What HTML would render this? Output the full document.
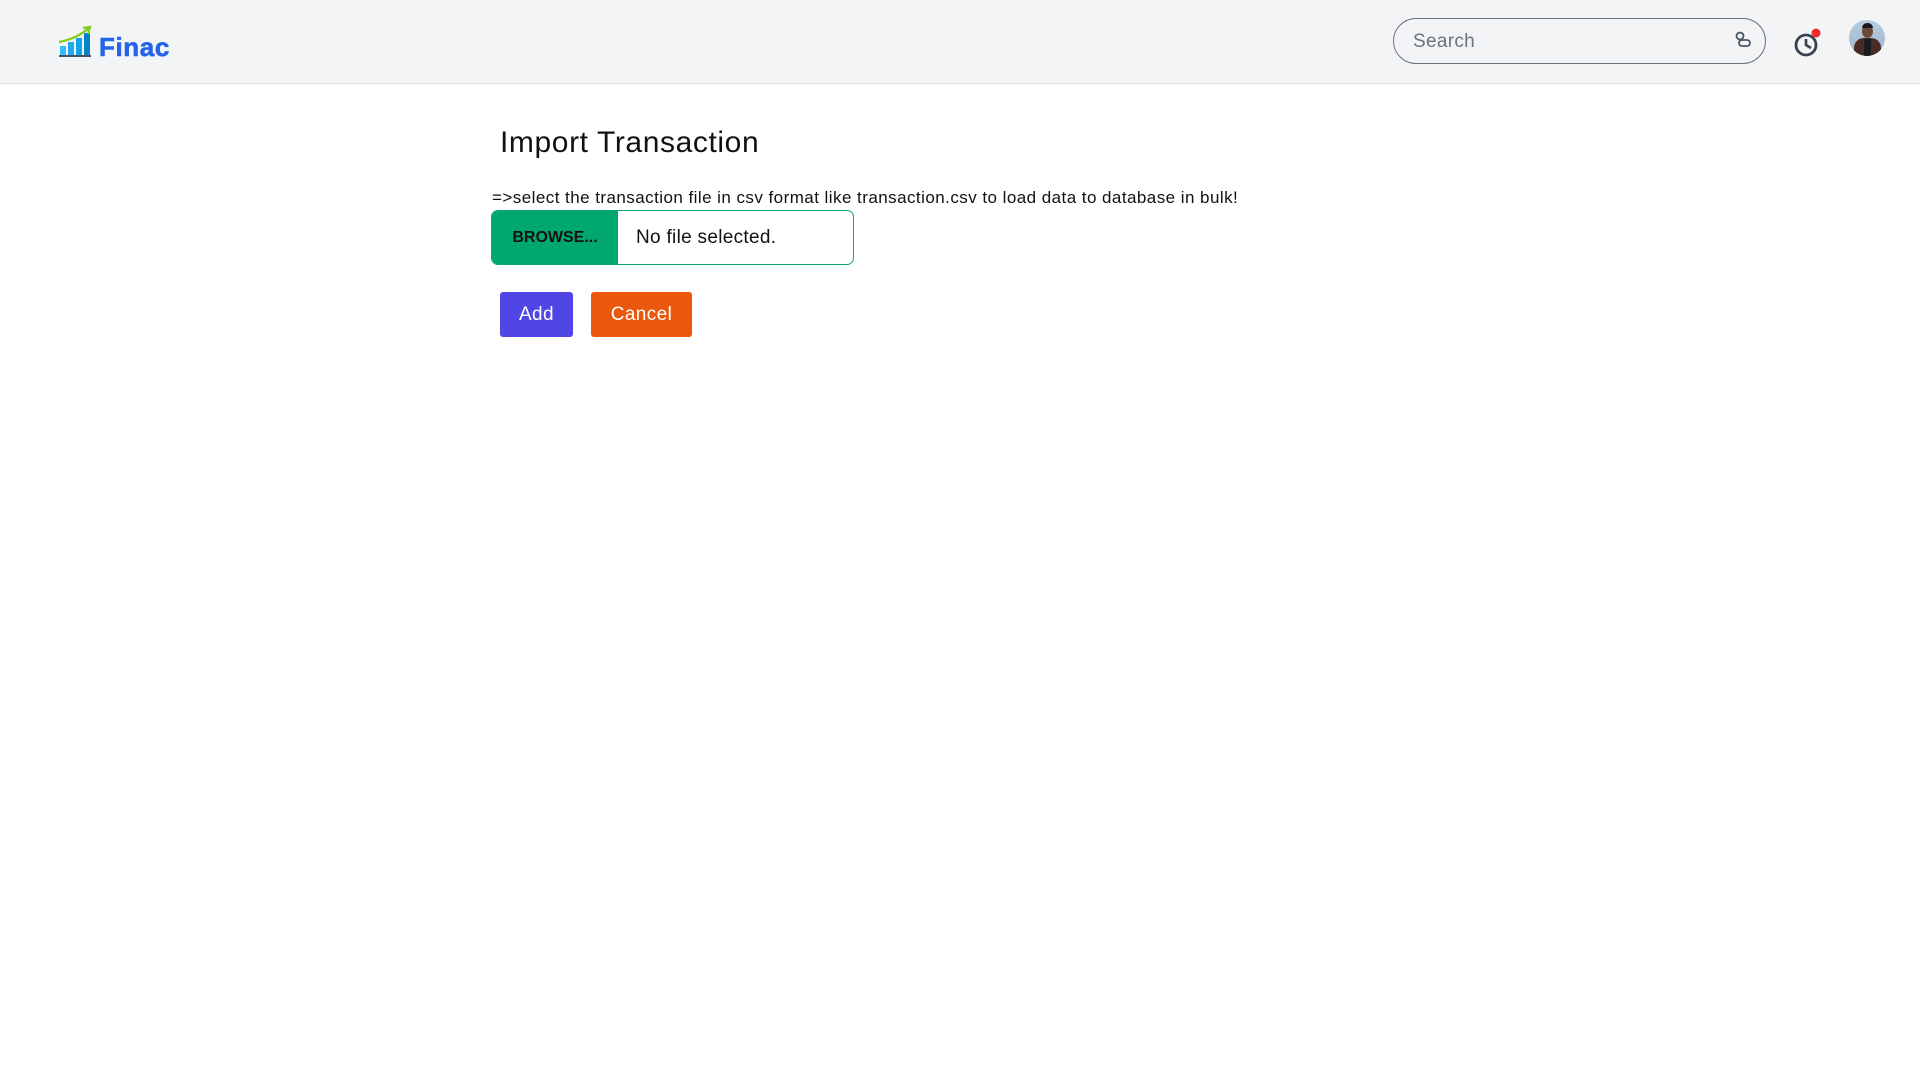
<!DOCTYPE html>
<html><head><meta charset="utf-8"><style>
*{box-sizing:border-box;margin:0;padding:0}
body{width:1920px;height:1080px;background:#fff;font-family:"Liberation Sans",sans-serif;color:#111;position:relative;overflow:hidden}
.hdr{position:absolute;left:0;top:0;width:1920px;height:84px;background:#f3f4f6;border-bottom:1px solid #e5e7eb;box-shadow:0 1px 2px rgba(0,0,0,.05)}
.abs{position:absolute}
.search{left:1393px;top:18px;width:373px;height:46px;border:1.5px solid #6b7280;border-radius:23px;}
.search span{position:absolute;left:19px;top:12px;font-size:19px;color:#6b7280;letter-spacing:0.3px}
.btn{position:absolute;color:#fff;font-size:19px;text-align:center;border-radius:3px;letter-spacing:0.4px}
</style></head><body>
<div class="hdr">
 <svg class="abs" style="left:58px;top:25px" width="34" height="34" viewBox="0 0 34 34">
  <rect x="2" y="21" width="6" height="9" fill="#38bdf8"/>
  <rect x="10" y="17" width="6" height="13" fill="#22a8f0"/>
  <rect x="18" y="13" width="6" height="17" fill="#0ea5e9"/>
  <rect x="26" y="8" width="6" height="22" fill="#0284c7"/>
  <rect x="1" y="30" width="32" height="2" fill="#475569"/>
  <path d="M1 17 Q18 14 31 3" stroke="#84cc16" stroke-width="2.2" fill="none"/>
  <path d="M25 3 L32 2 L30 9" stroke="#84cc16" stroke-width="2.2" fill="none"/>
 </svg>
 <div class="abs" style="left:99px;top:32px;font-size:26px;font-weight:900;color:#2563eb;letter-spacing:0.6px;-webkit-text-stroke:0.6px #2563eb">Finac</div>
 <div class="abs search"><span>Search</span>
  <svg class="abs" style="left:340px;top:12px" width="18" height="18" viewBox="0 0 18 18"><circle cx="6" cy="5" r="3.5" stroke="#4b5563" stroke-width="1.8" fill="none"/><rect x="5" y="9" width="11" height="6" rx="3" stroke="#4b5563" stroke-width="1.8" fill="none"/></svg>
 </div>
 <svg class="abs" style="left:1792px;top:27px" width="32" height="32" viewBox="0 0 32 32"><circle cx="14" cy="18" r="10" stroke="#374151" stroke-width="2.8" fill="none"/><path d="M14 12 V18 L19 21" stroke="#374151" stroke-width="2.6" fill="none"/><circle cx="24" cy="6" r="4.5" fill="#ef2b2b"/></svg>
 <div class="abs" style="left:1849px;top:20px;width:36px;height:36px;border-radius:50%;background:linear-gradient(#b7cde0,#9db4c9);overflow:hidden">
  <div class="abs" style="left:13px;top:5px;width:11px;height:13px;border-radius:50%;background:#6b4a3a"></div>
  <div class="abs" style="left:13px;top:3px;width:11px;height:5px;border-radius:5px 5px 0 0;background:#1a1a1a"></div>
  <div class="abs" style="left:5px;top:18px;width:27px;height:20px;border-radius:10px 10px 0 0;background:#4a2a25"></div>
  <div class="abs" style="left:15px;top:19px;width:7px;height:17px;background:#1b1b22"></div>
 </div>
</div>
<div class="abs" style="left:500px;top:126px;font-size:30px;letter-spacing:0.6px;color:#111">Import Transaction</div>
<div class="abs" style="left:492px;top:188px;font-size:17px;letter-spacing:0.45px;white-space:nowrap">=&gt;select the transaction file in csv format like transaction.csv to load data to database in bulk!</div>
<div class="abs" style="left:491px;top:210px;width:363px;height:55px;border:1.5px solid #10a37f;border-radius:7px;overflow:hidden">
 <div class="abs" style="left:0;top:0;width:126px;height:55px;background:#00a76f;font-weight:bold;font-size:16px;line-height:53px;text-align:center;color:#111">BROWSE...</div>
 <div class="abs" style="left:144px;top:16px;font-size:19px;color:#111;letter-spacing:0.3px">No file selected.</div>
</div>
<div class="btn" style="left:500px;top:292px;width:73px;height:45px;line-height:45px;background:#4f46e5">Add</div>
<div class="btn" style="left:591px;top:292px;width:101px;height:45px;line-height:45px;background:#ea580c">Cancel</div>
</body></html>
